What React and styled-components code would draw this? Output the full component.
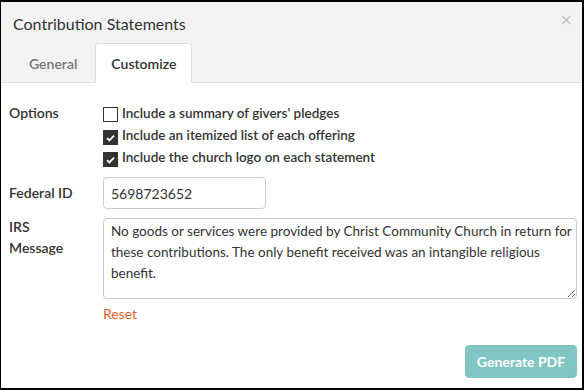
import React from "react";
import styled, { createGlobalStyle } from "styled-components";

const Global = createGlobalStyle`
  html, body {
    margin: 0;
    padding: 0;
    background: #000;
  }
  body {
    font-family: Lato, "Open Sans", sans-serif;
    color: #333;
  }
`;

const Dialog = styled.div`
  margin: 2px 2px 2px 1px;
  width: 581px;
  height: 386px;
  background: #fff;
  display: flex;
  flex-direction: column;
`;

const Header = styled.div`
  background: #f3f3f3;
  border-bottom: 1px solid #ddd;
  padding: 0 0 0 12px;
`;

const TitleRow = styled.div`
  display: flex;
  justify-content: space-between;
  align-items: center;
  height: 41px;
  padding-top: 1px;
  box-sizing: border-box;
`;

const Title = styled.h4`
  margin: 0;
  font-size: 16px;
  font-weight: 400;
  color: #333;
`;

const Close = styled.button`
  border: none;
  background: none;
  color: #c4c4c4;
  font-size: 16px;
  font-family: "DejaVu Sans", sans-serif;
  padding: 0 9px 7px 0;
  cursor: pointer;
`;

const Tabs = styled.div`
  display: flex;
  gap: 2px;
  margin-bottom: -1px;
`;

const Tab = styled.div`
  box-sizing: border-box;
  height: 40px;
  padding: 0 15px;
  display: flex;
  align-items: center;
  font-size: 14px;
  font-weight: 600;
  color: ${(p) => (p.active ? "#333" : "#777")};
  background: ${(p) => (p.active ? "#fff" : "transparent")};
  border: 1px solid ${(p) => (p.active ? "#ddd" : "transparent")};
  border-bottom-color: ${(p) => (p.active ? "#fff" : "transparent")};
  border-radius: 4px 4px 0 0;
`;

const Body = styled.div`
  flex: 1;
  padding: 19px 5px 10px 8px;
  display: flex;
  flex-direction: column;
`;

const Row = styled.div`
  display: grid;
  grid-template-columns: 94px 1fr;
  margin-bottom: ${(p) => p.gap || 0}px;
`;

const Label = styled.div`
  font-size: 14px;
  font-weight: 600;
  color: #333;
  line-height: 21px;
  margin-top: ${(p) => p.top || 0}px;
`;

const Checks = styled.div`
  display: flex;
  flex-direction: column;
  gap: 1px;
  margin-top: 1px;
`;

const CheckRow = styled.label`
  display: flex;
  align-items: center;
  gap: 4px;
  font-size: 13.5px;
  font-weight: 600;
  line-height: 21px;
  color: #333;
`;

const Box = styled.span`
  width: 15px;
  height: 15px;
  box-sizing: border-box;
  border: 1px solid #333;
  background: ${(p) => (p.checked ? "#333" : "#fff")};
  display: flex;
  align-items: center;
  justify-content: center;
  margin-top: ${(p) => (p.checked ? 4 : 2)}px;
`;

const Input = styled.div`
  width: 163px;
  height: 32px;
  box-sizing: border-box;
  border: 1px solid #ccc;
  border-radius: 4px;
  padding: 0 7px;
  display: flex;
  align-items: center;
  font-size: 14px;
  color: #333;
`;

const TextArea = styled.textarea`
  width: 100%;
  height: 81px;
  box-sizing: border-box;
  border: 1px solid #ccc;
  border-radius: 4px;
  padding: 2px 1px 2px 7px;
  font-family: Lato, "Open Sans", sans-serif;
  font-size: 13.5px;
  line-height: 21px;
  color: #333;
  resize: vertical;
  overflow: hidden;
  display: block;
`;

const Reset = styled.a`
  display: block;
  margin-top: 5px;
  font-size: 14px;
  line-height: 20px;
  color: #e0601f;
  text-decoration: none;
`;

const Footer = styled.div`
  margin-top: auto;
  display: flex;
  justify-content: flex-end;
`;

const Button = styled.button`
  width: 112px;
  height: 33px;
  border: 1px solid #7cc4c0;
  border-radius: 4px;
  background: #80c7c3;
  color: #fff;
  font-family: Lato, "Open Sans", sans-serif;
  font-size: 14px;
  font-weight: 700;
`;

const Check = () => (
  <svg width="9" height="8" viewBox="0 0 9 8">
    <path d="M1 4.2 L3.4 6.4 L8 1.6" stroke="#fff" strokeWidth="1.8" fill="none" />
  </svg>
);

const options = [
  { text: "Include a summary of givers' pledges", checked: false },
  { text: "Include an itemized list of each offering", checked: true },
  { text: "Include the church logo on each statement", checked: true },
];

export default function App() {
  return (
    <>
      <Global />
      <Dialog>
        <Header>
          <TitleRow>
            <Title>Contribution Statements</Title>
            <Close>×</Close>
          </TitleRow>
          <Tabs>
            <Tab>General</Tab>
            <Tab active>Customize</Tab>
          </Tabs>
        </Header>
        <Body>
          <Row gap={9}>
            <Label>Options</Label>
            <Checks>
              {options.map((o) => (
                <CheckRow key={o.text}>
                  <Box checked={o.checked}>{o.checked && <Check />}</Box>
                  {o.text}
                </CheckRow>
              ))}
            </Checks>
          </Row>
          <Row gap={9}>
            <Label top={5}>Federal ID</Label>
            <Input>5698723652</Input>
          </Row>
          <Row>
            <Label top={-2}>
              IRS
              <br />
              Message
            </Label>
            <div>
              <TextArea
                readOnly
                defaultValue="No goods or services were provided by Christ Community Church in return for these contributions. The only benefit received was an intangible religious benefit."
              />
              <Reset href="#none">Reset</Reset>
            </div>
          </Row>
          <Footer>
            <Button>Generate PDF</Button>
          </Footer>
        </Body>
      </Dialog>
    </>
  );
}
